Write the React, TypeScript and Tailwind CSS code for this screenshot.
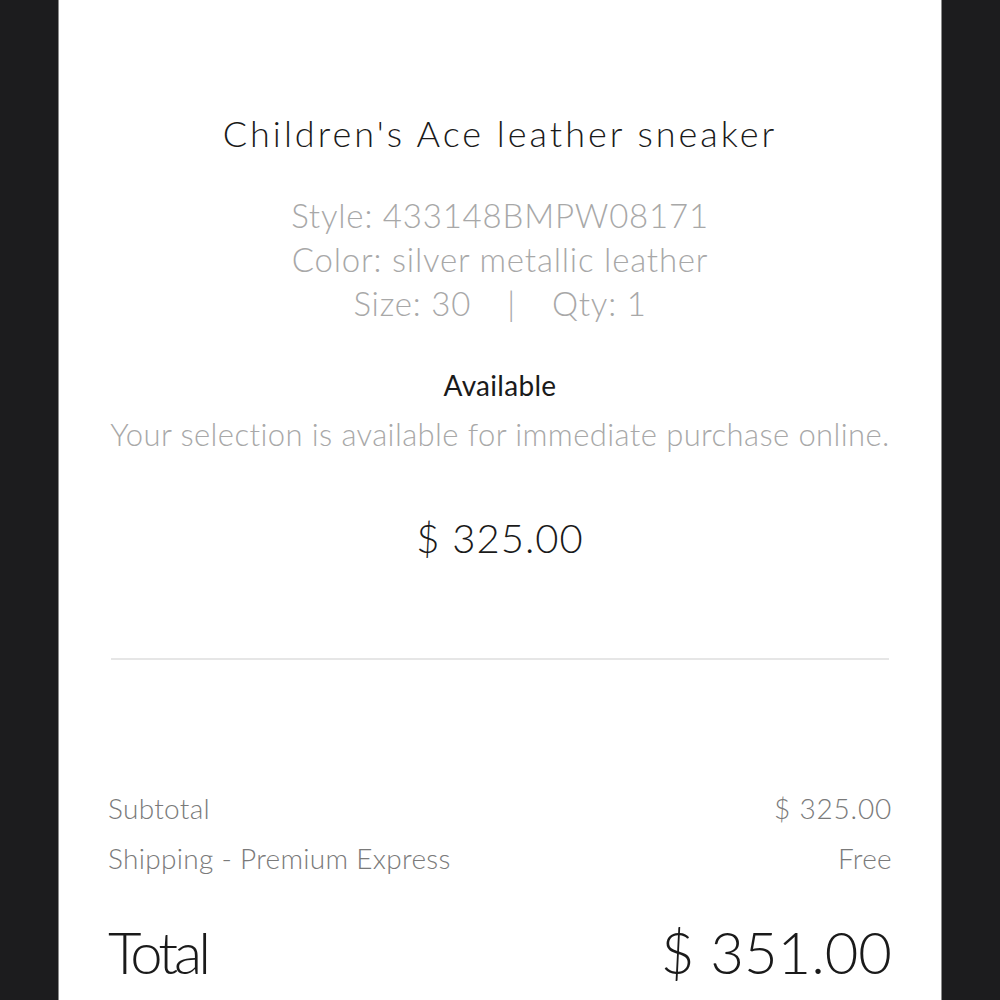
import React from "react";

export default function App() {
  return (
    <div className="flex h-[1000px] w-[1000px] overflow-hidden bg-[#1c1c1e]" style={{ fontFamily: "Lato, 'Liberation Sans', sans-serif" }}>
      <div className="w-[58px] shrink-0" />
      <div className="flex w-[884px] shrink-0 flex-col items-center bg-white border-x border-[#8a8a8a]">
        <h1 className="mt-[110px] text-[36px] font-light leading-[46px] tracking-[3px] text-[#1a1a1a]">
          Children's Ace leather sneaker
        </h1>
        <div className="mt-[37px] flex flex-col items-center text-[33px] font-light leading-[44px] tracking-[0.8px] text-[#a8a8a8]">
          <div>Style: 433148BMPW08171</div>
          <div>Color: silver metallic leather</div>
          <div className="flex">
            <span>Size: 30</span>
            <span className="mx-[36px]">|</span>
            <span>Qty: 1</span>
          </div>
        </div>
        <div className="mt-[43px] text-[28px] leading-[34px] tracking-[0.3px] text-[#1a1a1a]">Available</div>
        <div className="mt-[14px] text-[31px] font-light leading-[36px] tracking-[0.4px] text-[#a8a8a8]">
          Your selection is available for immediate purchase online.
        </div>
        <div className="mt-[62px] text-[40px] font-light leading-[48px] tracking-[1px] text-[#1a1a1a]">$ 325.00</div>
        <div className="mt-[96px] h-[2px] w-[778px] bg-[#e6e6e6]" />
        <div className="mt-[123px] flex w-[784px] flex-col text-[28px] font-light leading-[50px] tracking-[0.3px] text-[#7a7a7a]">
          <div className="flex justify-between">
            <span>Subtotal</span>
            <span className="tracking-[0.8px]">$ 325.00</span>
          </div>
          <div className="flex justify-between">
            <span>Shipping - Premium Express</span>
            <span>Free</span>
          </div>
        </div>
        <div className="mt-[37px] flex w-[784px] justify-between text-[58px] font-light leading-[64px] text-[#1a1a1a]">
          <span className="tracking-[-4px]">Total</span>
          <span>$ 351.00</span>
        </div>
      </div>
      <div className="w-[58px] shrink-0" />
    </div>
  );
}
